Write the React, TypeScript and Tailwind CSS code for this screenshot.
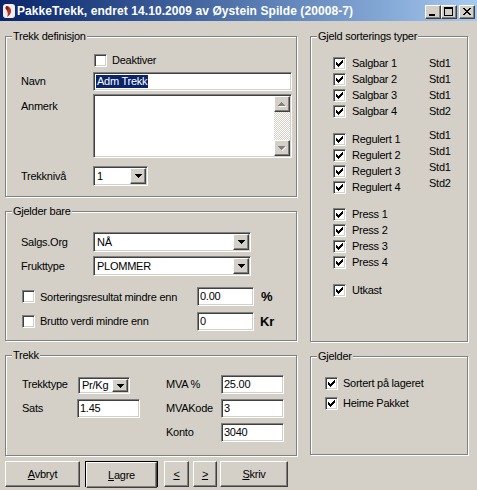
import type { ReactNode } from 'react'

const sunken =
  'border border-t-[#808080] border-l-[#808080] border-b-white border-r-white shadow-[inset_1px_1px_0_#404040,inset_-1px_-1px_0_#d4d0c8]'
const raised =
  'border border-t-white border-l-white border-b-[#404040] border-r-[#404040] shadow-[inset_-1px_-1px_0_#808080] bg-[#d4d0c8]'

function CheckMark() {
  return (
    <svg width="7" height="7" viewBox="0 0 7 7" shapeRendering="crispEdges">
      <path
        d="M6 0h1v1h-1z M5 1h2v1h-2z M0 2h1v1h-1z M4 2h3v1h-3z M0 3h2v1h-2z M3 3h3v1h-3z M0 4h5v1h-5z M1 5h3v1h-3z M2 6h1v1h-1z"
        fill="#000"
      />
    </svg>
  )
}

function DownArrow({ color = '#000' }: { color?: string }) {
  return (
    <svg width="7" height="4" viewBox="0 0 7 4" shapeRendering="crispEdges">
      <path d="M0 0h7v1h-7z M1 1h5v1h-5z M2 2h3v1h-3z M3 3h1v1h-1z" fill={color} />
    </svg>
  )
}

function Checkbox({ checked }: { checked?: boolean }) {
  return (
    <span className={`${sunken} bg-white w-[13px] h-[13px] shrink-0 flex items-center justify-center`}>
      {checked && <CheckMark />}
    </span>
  )
}

function TextBox({ value, className = '' }: { value: ReactNode; className?: string }) {
  return (
    <div className={`${sunken} bg-white h-[19px] flex items-center pl-[2px] leading-none ${className}`}>{value}</div>
  )
}

function Combo({ value, className = '' }: { value: string; className?: string }) {
  return (
    <div className={`${sunken} bg-white p-[1px] flex ${className}`}>
      <span className="flex-1 flex items-center pl-[2px]">{value}</span>
      <span className={`${raised} w-[16px] flex items-center justify-center`}>
        <DownArrow />
      </span>
    </div>
  )
}

function Group({ label, className = '', children }: { label: string; className?: string; children?: ReactNode }) {
  return (
    <div className={`relative border border-[#808080] shadow-[inset_1px_1px_0_#fff,1px_1px_0_#fff] ${className}`}>
      <span className="absolute left-[6px] -top-[8px] px-[1px] bg-[#d4d0c8] leading-[14px]">{label}</span>
      {children}
    </div>
  )
}

function Btn({ children, className = '' }: { children: ReactNode; className?: string }) {
  return (
    <div className={`${raised} h-[26px] flex items-center justify-center ${className}`}>{children}</div>
  )
}

function CaptionBtn({ children, className = '' }: { children: ReactNode; className?: string }) {
  return <div className={`${raised} w-[16px] h-[14px] flex items-center justify-center ${className}`}>{children}</div>
}

function TitleBar() {
  return (
    <div className="h-[21px] flex items-center bg-linear-to-r from-[#0a246a] to-[#a6caf0]">
      <svg className="ml-[2px]" width="14" height="16" viewBox="0 0 14 16">
        <rect x="1" y="1" width="12" height="14" rx="3" fill="#f4eeee" />
        <path d="M4 3c3 0 5 2 5 5s-2 5-4 6c1-2 1-4 0-6S3 5 4 3z" fill="#b0302a" />
        <circle cx="5" cy="5" r="1.5" fill="#7a1a16" />
      </svg>
      <span className="ml-[1px] text-white font-bold text-[12px] tracking-[0.08px] whitespace-nowrap">
        PakkeTrekk, endret 14.10.2009 av Øystein Spilde (20008-7)
      </span>
      <div className="ml-auto mr-[2px] mt-[3px] flex">
        <CaptionBtn>
          <svg width="14" height="12" viewBox="0 0 14 12" shapeRendering="crispEdges">
            <rect x="3" y="8" width="6" height="2" fill="#000" />
          </svg>
        </CaptionBtn>
        <CaptionBtn>
          <svg width="14" height="12" viewBox="0 0 14 12" shapeRendering="crispEdges">
            <path d="M2 1h9v2h-9z M2 3h1v6h-1z M10 3h1v6h-1z M2 9h9v1h-9z" fill="#000" />
          </svg>
        </CaptionBtn>
        <CaptionBtn className="ml-[2px]">
          <svg width="14" height="12" viewBox="0 0 14 12" shapeRendering="crispEdges">
            <path
              d="M3 2h2v1h-2z M9 2h2v1h-2z M4 3h2v1h-2z M8 3h2v1h-2z M5 4h4v1h-4z M6 5h2v1h-2z M5 6h4v1h-4z M4 7h2v1h-2z M8 7h2v1h-2z M3 8h2v1h-2z M9 8h2v1h-2z"
              fill="#000"
            />
          </svg>
        </CaptionBtn>
      </div>
    </div>
  )
}

const sorteringer = [
  [
    ['Salgbar 1', 'Std1'],
    ['Salgbar 2', 'Std1'],
    ['Salgbar 3', 'Std1'],
    ['Salgbar 4', 'Std2'],
  ],
  [
    ['Regulert 1', 'Std1'],
    ['Regulert 2', 'Std1'],
    ['Regulert 3', 'Std1'],
    ['Regulert 4', 'Std2'],
  ],
  [
    ['Press 1', ''],
    ['Press 2', ''],
    ['Press 3', ''],
    ['Press 4', ''],
  ],
  [['Utkast', '']],
]

export default function App() {
  return (
    <div className="w-[477px] h-[490px] overflow-hidden bg-[#d4d0c8] text-black text-[11px] tracking-[-0.25px] font-['Liberation_Sans',Arial,sans-serif]">
      <TitleBar />

      <div className="flex gap-[13px] pl-[5px] pt-[15px]">
        {/* left side */}
        <div className="w-[292px] flex flex-col gap-[14px]">
          <Group label="Trekk definisjon" className="h-[161px]">
            <div className="pl-[15px] pt-[17px]">
              <div className="ml-[73px] h-[13px] flex items-center gap-[5px]">
                <Checkbox />
                <span>Deaktiver</span>
              </div>
              <div className="mt-[5px] flex items-center">
                <span className="w-[72px]">Navn</span>
                <TextBox
                  className="w-[199px] pl-[1px]"
                  value={<span className="bg-[#0a246a] text-white px-[1px] leading-[13px]">Adm Trekk</span>}
                />
              </div>
              <div className="mt-[3px] flex items-start">
                <span className="w-[72px] mt-[4px]">Anmerk</span>
                <div className={`${sunken} bg-white w-[199px] h-[64px] p-[1px] flex justify-end`}>
                  <div className="w-[16px] flex flex-col bg-[repeating-conic-gradient(#d4d0c8_0_25%,#fff_0_50%)] bg-[length:2px_2px]">
                    <div className={`${raised} h-[16px] flex items-center justify-center`}>
                      <svg width="8" height="5" viewBox="0 0 8 5" shapeRendering="crispEdges">
                        <path d="M3 0h1v1h-1z M2 1h3v1h-3z M1 2h5v1h-5z M0 3h7v1h-7z" fill="#808080" />
                        <path d="M1 4h7v1h-7z" fill="#fff" />
                      </svg>
                    </div>
                    <div className="flex-1" />
                    <div className={`${raised} h-[16px] flex items-center justify-center`}>
                      <svg width="8" height="5" viewBox="0 0 8 5" shapeRendering="crispEdges">
                        <path d="M0 0h7v1h-7z M1 1h5v1h-5z M2 2h3v1h-3z M3 3h1v1h-1z" fill="#808080" />
                        <path d="M7 1h1v1h-1z M6 2h1v1h-1z M5 3h1v1h-1z M4 4h1v1h-1z" fill="#fff" />
                      </svg>
                    </div>
                  </div>
                </div>
              </div>
              <div className="mt-[8px] flex items-center">
                <span className="w-[72px]">Trekknivå</span>
                <Combo value="1" className="w-[55px] h-[20px]" />
              </div>
            </div>
          </Group>

          <Group label="Gjelder bare" className="h-[130px]">
            <div className="pl-[15px] pt-[20px]">
              <div className="flex items-center">
                <span className="w-[72px]">Salgs.Org</span>
                <Combo value="NÅ" className="w-[158px] h-[20px]" />
              </div>
              <div className="mt-[4px] flex items-center">
                <span className="w-[72px]">Frukttype</span>
                <Combo value="PLOMMER" className="w-[158px] h-[20px]" />
              </div>
            </div>
            <div className="pl-[16px] mt-[11px] flex items-center">
              <Checkbox />
              <span className="ml-[5px] w-[157px]">Sorteringsresultat mindre enn</span>
              <TextBox value="0.00" className="w-[57px]" />
              <span className="ml-[7px] font-bold text-[13px]">%</span>
            </div>
            <div className="pl-[16px] mt-[5px] flex items-center">
              <Checkbox />
              <span className="ml-[5px] w-[157px]">Brutto verdi mindre enn</span>
              <TextBox value="0" className="w-[57px]" />
              <span className="ml-[6px] font-bold text-[13px]">Kr</span>
            </div>
          </Group>

          <Group label="Trekk" className="h-[101px]">
            <div className="pl-[16px] pt-[19px] flex">
              <div className="w-[144px] flex flex-col gap-[5px]">
                <div className="h-[19px] flex items-center">
                  <span className="w-[56px]">Trekktype</span>
                  <Combo value="Pr/Kg" className="w-[52px] h-[17px] mt-[2px]" />
                </div>
                <div className="h-[19px] flex items-center">
                  <span className="w-[55px]">Sats</span>
                  <TextBox value="1.45" className="w-[63px]" />
                </div>
              </div>
              <div className="flex flex-col gap-[5px]">
                <div className="flex items-center">
                  <span className="w-[55px]">MVA %</span>
                  <TextBox value="25.00" className="w-[63px]" />
                </div>
                <div className="flex items-center">
                  <span className="w-[55px]">MVAKode</span>
                  <TextBox value="3" className="w-[63px]" />
                </div>
                <div className="flex items-center">
                  <span className="w-[55px]">Konto</span>
                  <TextBox value="3040" className="w-[63px]" />
                </div>
              </div>
            </div>
          </Group>
        </div>

        {/* right side */}
        <div className="w-[158px] flex flex-col gap-[14px]">
          <Group label="Gjeld sorterings typer" className="h-[306px]">
            <div className="pl-[22px] pt-[20px] flex flex-col gap-[15px]">
              {sorteringer.map((section, i) => (
                <div key={i} className={`flex flex-col gap-[3px] ${i === 2 ? '-mt-[1px]' : ''}`}>
                  {section.map(([name, std]) => (
                    <div key={name} className="h-[13px] flex items-center">
                      <Checkbox checked />
                      <span className="ml-[6px] w-[77px]">{name}</span>
                      {std && <span className={name.startsWith('Regulert') ? 'mb-[8px]' : ''}>{std}</span>}
                    </div>
                  ))}
                </div>
              ))}
            </div>
          </Group>

          <Group label="Gjelder" className="h-[99px]">
            <div className="pl-[14px] pt-[20px] flex flex-col gap-[7px]">
              <div className="h-[13px] flex items-center">
                <Checkbox checked />
                <span className="ml-[5px]">Sortert på lageret</span>
              </div>
              <div className="h-[13px] flex items-center">
                <Checkbox checked />
                <span className="ml-[5px]">Heime Pakket</span>
              </div>
            </div>
          </Group>
        </div>
      </div>

      <div className="mt-[5px] pl-[5px] flex">
        <Btn className="w-[75px]">
          <span>
            <u>A</u>vbryt
          </span>
        </Btn>
        <div className="ml-[5px] w-[73px] h-[26px] border border-black flex">
          <Btn className="flex-1 h-[24px]">
            <span>
              <u>L</u>agre
            </span>
          </Btn>
        </div>
        <Btn className="ml-[6px] w-[25px]">
          <u>&lt;</u>
        </Btn>
        <Btn className="ml-[4px] w-[24px]">
          <u>&gt;</u>
        </Btn>
        <Btn className="ml-[3px] w-[68px]">
          <span>
            <u>S</u>kriv
          </span>
        </Btn>
      </div>
    </div>
  )
}
